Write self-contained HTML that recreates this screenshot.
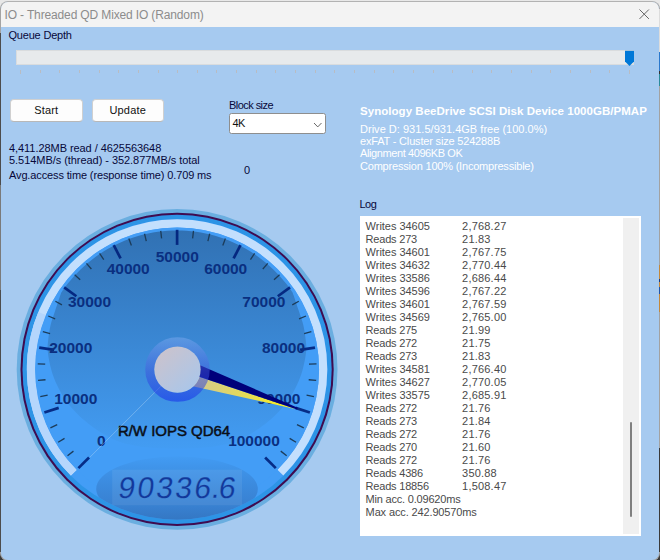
<!DOCTYPE html>
<html><head><meta charset="utf-8"><title>IO - Threaded QD Mixed IO (Random)</title>
<style>
html,body{margin:0;padding:0}
body{width:660px;height:560px;overflow:hidden;position:relative;background:linear-gradient(#e8e8e8 0,#e8e8e8 50%,#3a3a3a 50%,#3a3a3a 100%);font-family:"Liberation Sans",Arial,sans-serif;font-size:11px;color:#08083a}
.edge{position:absolute;width:1px;z-index:5}
.win{position:absolute;left:0px;top:1px;width:660px;height:560px;box-sizing:border-box;border:1px solid #a4a4a4;border-top-color:#b2b2b2;border-radius:8px;background:#a6caf0;overflow:hidden}
.title{position:absolute;left:0;top:0;width:100%;height:25px;background:#f3f3f3}
.title span{position:absolute;left:3.5px;top:6px;font-size:12px;color:#8c8c8c;letter-spacing:-0.14px;white-space:pre}
.abs{position:absolute;white-space:pre;line-height:13px}
.track{position:absolute;left:16px;top:50px;width:618px;height:15px;box-sizing:border-box;background:#e7eaec;border:1px solid #d9dcde}
.ticks i{position:absolute;top:70px;width:1px;height:3px;background:#b9bcc2}
.btn{position:absolute;top:99px;height:22.5px;width:72.5px;letter-spacing:0.2px;box-sizing:border-box;background:#fdfdfd;border:1px solid #d0d0d0;border-bottom-color:#b8b8b8;border-radius:4px;text-align:center;line-height:21px;color:#111}
.combo{position:absolute;left:229px;top:113px;width:97px;height:20.5px;box-sizing:border-box;background:#fff;border:1px solid #8e8e8e;border-radius:2.5px}
.combo span{position:absolute;left:2.5px;top:3px;letter-spacing:-0.5px;line-height:13px;color:#111}
.w{color:#fff}
.log{position:absolute;left:360px;top:216px;width:281px;height:319.6px;background:#fff;box-sizing:border-box}
.sb{position:absolute;right:2px;top:2px;width:16px;bottom:1.6px;background:#f0f0f0}
.thumb{position:absolute;left:629.9px;top:422px;width:2.2px;height:95px;background:#808080;border-radius:1px}
.ll{position:absolute;left:5.6px;height:13px;line-height:13px;white-space:pre;color:#4a4a4a}
.ll .b{position:absolute;left:96.5px;letter-spacing:0.2px}
.gauge{position:absolute;left:0;top:0}
</style></head><body>
<div class="edge" style="left:0;top:33px;height:519px;background:#4c4c4c"></div><div class="edge" style="left:0;top:185px;height:105px;background:#7a7a7a"></div><div class="edge" style="left:659px;top:9px;height:43px;background:#dcdcdc"></div><div class="edge" style="left:659px;top:52px;height:34px;background:linear-gradient(#2a78cc 0,#2a78cc 55%,#333 55%,#333 65%,#2a8a9a 65%,#2a8a9a 100%)"></div><div class="edge" style="left:659px;top:86px;height:362px;background:#a2a2a2"></div><div class="edge" style="left:659px;top:265px;height:47px;background:#c4883a"></div><div class="edge" style="left:659px;top:279px;height:3px;background:#1c3c80"></div><div class="edge" style="left:659px;top:287px;height:7px;background:#2454a4"></div><div class="edge" style="left:659px;top:448px;height:104px;background:#3a3a3a"></div>
<div class="win"><div class="title"><span>IO - Threaded QD Mixed IO (Random)</span>
<svg style="position:absolute;left:637px;top:6px" width="14" height="14" viewBox="0 0 14 14"><path d="M1.5 1.5 L10.9 10.9 M10.9 1.5 L1.5 10.9" stroke="#5e5e5e" stroke-width="0.95" fill="none"/></svg>
</div></div>
<div class="abs" style="left:8.5px;top:29px;letter-spacing:-0.2px">Queue Depth</div>
<div class="track"></div>
<svg style="position:absolute;left:625px;top:50px" width="10" height="17" viewBox="0 0 10 17"><path d="M0 0.7 H9 V11.5 L4.5 16 L0 11.5 Z" fill="#0078d7"/></svg>
<div class="ticks"><i style="left:20.00px;height:4px"></i><i style="left:39.64px"></i><i style="left:59.29px"></i><i style="left:78.94px"></i><i style="left:98.58px"></i><i style="left:118.22px"></i><i style="left:137.87px"></i><i style="left:157.51px"></i><i style="left:177.16px"></i><i style="left:196.81px"></i><i style="left:216.45px"></i><i style="left:236.09px"></i><i style="left:255.74px"></i><i style="left:275.38px"></i><i style="left:295.03px"></i><i style="left:314.68px"></i><i style="left:334.32px"></i><i style="left:353.96px"></i><i style="left:373.61px"></i><i style="left:393.25px"></i><i style="left:412.90px"></i><i style="left:432.55px"></i><i style="left:452.19px"></i><i style="left:471.83px"></i><i style="left:491.48px"></i><i style="left:511.12px"></i><i style="left:530.77px"></i><i style="left:550.41px"></i><i style="left:570.06px"></i><i style="left:589.71px"></i><i style="left:609.35px"></i><i style="left:629.00px;height:4px"></i></div>
<div class="btn" style="left:10px">Start</div>
<div class="btn" style="left:91.5px">Update</div>
<div class="abs" style="left:229px;top:99px;letter-spacing:-0.55px">Block size</div>
<div class="combo"><span>4K</span><svg style="position:absolute;left:83px;top:7.5px" width="10" height="7" viewBox="0 0 10 7"><path d="M1 1 L4.75 4.9 L8.5 1" stroke="#555" stroke-width="0.9" fill="none"/></svg></div>
<div class="abs" style="left:9px;top:142px;letter-spacing:-0.06px">4,411.28MB read / 4625563648</div>
<div class="abs" style="left:9px;top:154px;letter-spacing:-0.05px">5.514MB/s (thread) - 352.877MB/s total</div>
<div class="abs" style="left:9px;top:169px;letter-spacing:-0.13px">Avg.access time (response time) 0.709 ms</div>
<div class="abs" style="left:244px;top:164px">0</div>
<div class="abs w" style="left:360px;top:105px;font-weight:bold;font-size:11.5px;letter-spacing:0.04px">Synology BeeDrive SCSI Disk Device 1000GB/PMAP</div>
<div class="abs w" style="left:360px;top:123px;letter-spacing:0.02px">Drive D: 931.5/931.4GB free (100.0%)</div>
<div class="abs w" style="left:360px;top:135px;letter-spacing:-0.18px">exFAT - Cluster size 524288B</div>
<div class="abs w" style="left:360px;top:147px;letter-spacing:-0.4px">Alignment 4096KB OK</div>
<div class="abs w" style="left:360px;top:160px;letter-spacing:-0.2px">Compression 100% (Incompressible)</div>
<div class="abs" style="left:359.5px;top:198px;letter-spacing:-0.5px">Log</div>
<div class="log"><div class="sb"></div><div class="ll" style="top:4px"><span class="a" style="letter-spacing:-0.03px">Writes 34605</span><span class="b">2,768.27</span></div><div class="ll" style="top:17px"><span class="a" style="letter-spacing:-0.2px">Reads 273</span><span class="b">21.83</span></div><div class="ll" style="top:30px"><span class="a" style="letter-spacing:-0.03px">Writes 34601</span><span class="b">2,767.75</span></div><div class="ll" style="top:43px"><span class="a" style="letter-spacing:-0.03px">Writes 34632</span><span class="b">2,770.44</span></div><div class="ll" style="top:56px"><span class="a" style="letter-spacing:-0.03px">Writes 33586</span><span class="b">2,686.44</span></div><div class="ll" style="top:69px"><span class="a" style="letter-spacing:-0.03px">Writes 34596</span><span class="b">2,767.22</span></div><div class="ll" style="top:82px"><span class="a" style="letter-spacing:-0.03px">Writes 34601</span><span class="b">2,767.59</span></div><div class="ll" style="top:95px"><span class="a" style="letter-spacing:-0.03px">Writes 34569</span><span class="b">2,765.00</span></div><div class="ll" style="top:108px"><span class="a" style="letter-spacing:-0.2px">Reads 275</span><span class="b">21.99</span></div><div class="ll" style="top:121px"><span class="a" style="letter-spacing:-0.2px">Reads 272</span><span class="b">21.75</span></div><div class="ll" style="top:134px"><span class="a" style="letter-spacing:-0.2px">Reads 273</span><span class="b">21.83</span></div><div class="ll" style="top:147px"><span class="a" style="letter-spacing:-0.03px">Writes 34581</span><span class="b">2,766.40</span></div><div class="ll" style="top:160px"><span class="a" style="letter-spacing:-0.03px">Writes 34627</span><span class="b">2,770.05</span></div><div class="ll" style="top:173px"><span class="a" style="letter-spacing:-0.03px">Writes 33575</span><span class="b">2,685.91</span></div><div class="ll" style="top:186px"><span class="a" style="letter-spacing:-0.2px">Reads 272</span><span class="b">21.76</span></div><div class="ll" style="top:199px"><span class="a" style="letter-spacing:-0.2px">Reads 273</span><span class="b">21.84</span></div><div class="ll" style="top:212px"><span class="a" style="letter-spacing:-0.2px">Reads 272</span><span class="b">21.76</span></div><div class="ll" style="top:225px"><span class="a" style="letter-spacing:-0.2px">Reads 270</span><span class="b">21.60</span></div><div class="ll" style="top:238px"><span class="a" style="letter-spacing:-0.2px">Reads 272</span><span class="b">21.76</span></div><div class="ll" style="top:251px"><span class="a" style="letter-spacing:-0.2px">Reads 4386</span><span class="b">350.88</span></div><div class="ll" style="top:264px"><span class="a" style="letter-spacing:-0.2px">Reads 18856</span><span class="b">1,508.47</span></div><div class="ll" style="top:277px"><span class="a" style="letter-spacing:-0.2px">Min acc. 0.09620ms</span><span class="b"></span></div><div class="ll" style="top:290px"><span class="a" style="letter-spacing:-0.13px">Max acc. 242.90570ms</span><span class="b"></span></div></div>
<div class="thumb"></div>
<svg class="gauge" width="660" height="560" viewBox="0 0 660 560">
<defs>
<linearGradient id="faceg" x1="0" y1="230" x2="0" y2="452" gradientUnits="userSpaceOnUse">
<stop offset="0" stop-color="#3171b3"/><stop offset="1" stop-color="#439df4"/>
</linearGradient>
<linearGradient id="arcg" x1="0" y1="220" x2="0" y2="480" gradientUnits="userSpaceOnUse">
<stop offset="0" stop-color="#c6e0fc"/><stop offset="1" stop-color="#b4d6fb"/>
</linearGradient>
<linearGradient id="ny" x1="177.5" y1="369.6" x2="296.4" y2="409.2" gradientUnits="userSpaceOnUse">
<stop offset="0.2" stop-color="#d4ca8c"/><stop offset="0.6" stop-color="#e6dc54"/><stop offset="1" stop-color="#fff410"/>
</linearGradient>
<linearGradient id="hubring" x1="0" y1="337" x2="0" y2="402" gradientUnits="userSpaceOnUse">
<stop offset="0" stop-color="#7dabef" stop-opacity="0.5"/><stop offset="0.55" stop-color="#3c52dc" stop-opacity="0.5"/><stop offset="1" stop-color="#142aea" stop-opacity="0.55"/>
</linearGradient>
<linearGradient id="hubdisc" x1="160" y1="350" x2="195" y2="390" gradientUnits="userSpaceOnUse">
<stop offset="0" stop-color="#cbc3cd"/><stop offset="1" stop-color="#a9c6ea"/>
</linearGradient>
<linearGradient id="ledg" x1="0" y1="457" x2="0" y2="520" gradientUnits="userSpaceOnUse">
<stop offset="0" stop-color="#429bf3"/><stop offset="0.19" stop-color="#3f93e8"/><stop offset="0.48" stop-color="#3b89dc"/><stop offset="0.79" stop-color="#3880d0"/><stop offset="1" stop-color="#3477c3"/>
</linearGradient>
<clipPath id="faceclip"><circle cx="177.1" cy="369.4" r="138.6"/></clipPath>
<clipPath id="ringclip"><circle cx="177.1" cy="369.4" r="150.3"/></clipPath>
</defs>
<circle cx="177.1" cy="369.4" r="160.4" fill="#6aaee0"/>
<circle cx="177.1" cy="369.4" r="156.6" fill="#3f0c50"/>
<circle cx="177.1" cy="369.4" r="154.6" fill="#2d94e6"/>
<circle cx="177.1" cy="369.4" r="150.3" fill="#439df6"/>
<path d="M73.83,472.67 A146.05,146.05 0 1 1 280.37,472.67" fill="none" stroke="#c3dffd" stroke-width="8.3"/><path d="M73.83,472.67 A146.05,146.05 0 0 1 42.17,313.51" fill="none" stroke="#b5d6fc" stroke-width="8.3"/>
<circle cx="177.1" cy="369.4" r="142.0" fill="#439df6"/>
<path d="M176.95,230.40 C173.77,230.40 170.60,230.51 167.40,230.74 C164.20,230.96 160.96,231.30 157.75,231.75 C154.55,232.20 151.36,232.77 148.20,233.44 C145.04,234.11 141.89,234.89 138.79,235.78 C135.68,236.68 132.60,237.68 129.56,238.78 C126.52,239.89 123.52,241.10 120.56,242.42 C117.61,243.73 114.70,245.15 111.84,246.67 C108.99,248.19 106.18,249.81 103.44,251.52 C100.70,253.23 98.01,255.05 95.40,256.95 C92.78,258.85 90.23,260.84 87.75,262.92 C85.28,265.00 82.87,267.17 80.54,269.41 C78.22,271.66 75.97,273.99 73.80,276.39 C71.64,278.79 69.56,281.28 67.57,283.82 C65.58,286.37 63.06,289.81 61.86,291.67 C60.67,293.54 61.49,291.91 60.40,295.00 C59.31,298.09 56.93,305.20 55.30,310.20 C53.67,315.20 51.78,320.03 50.60,325.00 C49.42,329.97 48.67,335.50 48.20,340.00 C47.73,344.50 47.27,346.97 47.80,352.00 C48.33,357.03 49.87,364.70 51.40,370.20 C52.93,375.70 54.63,380.00 57.00,385.00 C59.37,390.00 62.83,396.03 65.60,400.20 C68.37,404.37 70.75,406.85 73.60,410.00 C76.45,413.15 79.22,416.07 82.70,419.10 C86.18,422.13 90.55,425.47 94.50,428.20 C98.45,430.93 102.60,433.38 106.40,435.50 C110.20,437.62 113.37,439.38 117.30,440.90 C121.23,442.42 125.38,443.53 130.00,444.60 C134.62,445.67 140.00,446.70 145.00,447.30 C150.00,447.90 154.68,448.02 160.00,448.20 C165.32,448.38 171.30,448.40 176.95,448.40 C182.60,448.40 188.57,448.38 193.90,448.20 C199.22,448.02 203.90,447.90 208.90,447.30 C213.90,446.70 219.28,445.67 223.90,444.60 C228.52,443.53 232.67,442.42 236.60,440.90 C240.53,439.38 243.70,437.62 247.50,435.50 C251.30,433.38 255.45,430.93 259.40,428.20 C263.35,425.47 267.72,422.13 271.20,419.10 C274.68,416.07 277.45,413.15 280.30,410.00 C283.15,406.85 285.53,404.37 288.30,400.20 C291.07,396.03 294.53,390.00 296.90,385.00 C299.27,380.00 300.97,375.70 302.50,370.20 C304.03,364.70 305.57,357.03 306.10,352.00 C306.63,346.97 306.17,344.50 305.70,340.00 C305.23,335.50 304.48,329.97 303.30,325.00 C302.12,320.03 300.23,315.20 298.60,310.20 C296.97,305.20 294.59,298.09 293.50,295.00 C292.41,291.91 293.23,293.54 292.04,291.67 C290.84,289.81 288.32,286.37 286.33,283.82 C284.34,281.28 282.26,278.79 280.10,276.39 C277.93,273.99 275.68,271.66 273.36,269.41 C271.03,267.17 268.62,265.00 266.15,262.92 C263.67,260.84 261.12,258.85 258.50,256.95 C255.89,255.05 253.20,253.23 250.46,251.52 C247.72,249.81 244.91,248.19 242.06,246.67 C239.20,245.15 236.29,243.73 233.34,242.42 C230.38,241.10 227.38,239.89 224.34,238.78 C221.30,237.68 218.22,236.68 215.11,235.78 C212.01,234.89 208.86,234.11 205.70,233.44 C202.54,232.77 199.35,232.20 196.15,231.75 C192.94,231.30 189.70,230.96 186.50,230.74 C183.30,230.51 180.13,230.40 176.95,230.40Z" fill="url(#faceg)"/>
<g stroke="#1c3c5a" stroke-width="1.3"><line x1="67.55" y1="455.76" x2="73.44" y2="451.12"/><line x1="58.16" y1="442.29" x2="64.55" y2="438.37"/><line x1="50.41" y1="427.80" x2="57.23" y2="424.66"/><line x1="40.28" y1="396.62" x2="47.64" y2="395.15"/><line x1="38.03" y1="380.35" x2="45.51" y2="379.76"/><line x1="37.71" y1="363.92" x2="45.20" y2="364.22"/><line x1="42.84" y1="331.53" x2="50.06" y2="333.57"/><line x1="48.22" y1="316.02" x2="55.15" y2="318.89"/><line x1="55.39" y1="301.24" x2="61.93" y2="304.90"/><line x1="74.66" y1="274.71" x2="80.17" y2="279.80"/><line x1="86.50" y1="263.32" x2="91.37" y2="269.03"/><line x1="99.60" y1="253.41" x2="103.76" y2="259.65"/><line x1="128.82" y1="238.52" x2="131.41" y2="245.56"/><line x1="144.53" y1="233.75" x2="146.29" y2="241.05"/><line x1="160.70" y1="230.87" x2="161.59" y2="238.31"/><line x1="193.50" y1="230.87" x2="192.61" y2="238.31"/><line x1="209.67" y1="233.75" x2="207.91" y2="241.05"/><line x1="225.38" y1="238.52" x2="222.79" y2="245.56"/><line x1="254.60" y1="253.41" x2="250.44" y2="259.65"/><line x1="267.70" y1="263.32" x2="262.83" y2="269.03"/><line x1="279.54" y1="274.71" x2="274.03" y2="279.80"/><line x1="298.81" y1="301.24" x2="292.27" y2="304.90"/><line x1="305.98" y1="316.02" x2="299.05" y2="318.89"/><line x1="311.36" y1="331.53" x2="304.14" y2="333.57"/><line x1="316.49" y1="363.92" x2="309.00" y2="364.22"/><line x1="316.17" y1="380.35" x2="308.69" y2="379.76"/><line x1="313.92" y1="396.62" x2="306.56" y2="395.15"/><line x1="303.79" y1="427.80" x2="296.97" y2="424.66"/><line x1="296.04" y1="442.29" x2="289.65" y2="438.37"/><line x1="286.65" y1="455.76" x2="280.76" y2="451.12"/></g>
<g stroke="#00207a" stroke-opacity="0.9" stroke-width="2.7"><line x1="78.39" y1="468.11" x2="89.07" y2="457.43"/><line x1="44.33" y1="412.54" x2="58.69" y2="407.87"/><line x1="39.22" y1="347.56" x2="54.13" y2="349.92"/><line x1="64.16" y1="287.35" x2="76.38" y2="296.22"/><line x1="113.72" y1="245.02" x2="120.58" y2="258.47"/><line x1="177.10" y1="229.80" x2="177.10" y2="244.90"/><line x1="240.48" y1="245.02" x2="233.62" y2="258.47"/><line x1="290.04" y1="287.35" x2="277.82" y2="296.22"/><line x1="314.98" y1="347.56" x2="300.07" y2="349.92"/><line x1="309.87" y1="412.54" x2="295.51" y2="407.87"/><line x1="275.81" y1="468.11" x2="265.13" y2="457.43"/></g>
<g class="glab" font-family="Liberation Sans, Arial, sans-serif" font-weight="bold" font-size="15.5" fill="#0a2f80" text-anchor="middle"><text x="101.2" y="445.6">0</text><text x="75.8" y="403.6">10000</text><text x="70.8" y="353.1">20000</text><text x="89.5" y="306.7">30000</text><text x="128.2" y="274.2">40000</text><text x="177.3" y="262.4">50000</text><text x="225.7" y="274.2">60000</text><text x="263.9" y="306.7">70000</text><text x="283.5" y="353.1">80000</text><text x="278.9" y="403.6">90000</text><text x="254.0" y="445.6">100000</text></g>
<g clip-path="url(#ringclip)"><ellipse cx="177" cy="489" rx="80.8" ry="32.5" fill="url(#ledg)"/></g>
<rect x="112.2" y="469.7" width="129.8" height="35.6" fill="#ffffff" fill-opacity="0.07"/>
<text x="117.9" y="436.1" font-family="Liberation Sans, Arial, sans-serif" font-size="15" fill="#0a0f18" stroke="#0a0f18" stroke-width="0.5" textLength="112.3" lengthAdjust="spacing">R/W IOPS QD64</text>
<line x1="177.5" y1="369.6" x2="89.82" y2="457.28" stroke="#d8ecfa" stroke-opacity="0.3" stroke-width="1"/>
<polygon points="177.50,369.60 173.39,381.93 296.37,409.21" fill="url(#ny)"/>
<polygon points="177.50,369.60 181.61,357.27 297.67,407.71 297.17,409.51" fill="#00007a"/>
<circle cx="177.5" cy="369.6" r="27.7" fill="none" stroke="url(#hubring)" stroke-width="9.1"/>
<circle cx="177.5" cy="369.6" r="23.2" fill="url(#hubdisc)"/>
<g transform="translate(0,497.9) skewX(-8)" font-family="Liberation Sans, sans-serif" font-size="30" fill="#12389a" stroke="#4a8fdc" stroke-width="0.25">
<text x="117.2 136.2 155.2 174.2 193.2 210.6 217.8" y="0">90336.6</text>
</g>
</svg>
</body></html>
